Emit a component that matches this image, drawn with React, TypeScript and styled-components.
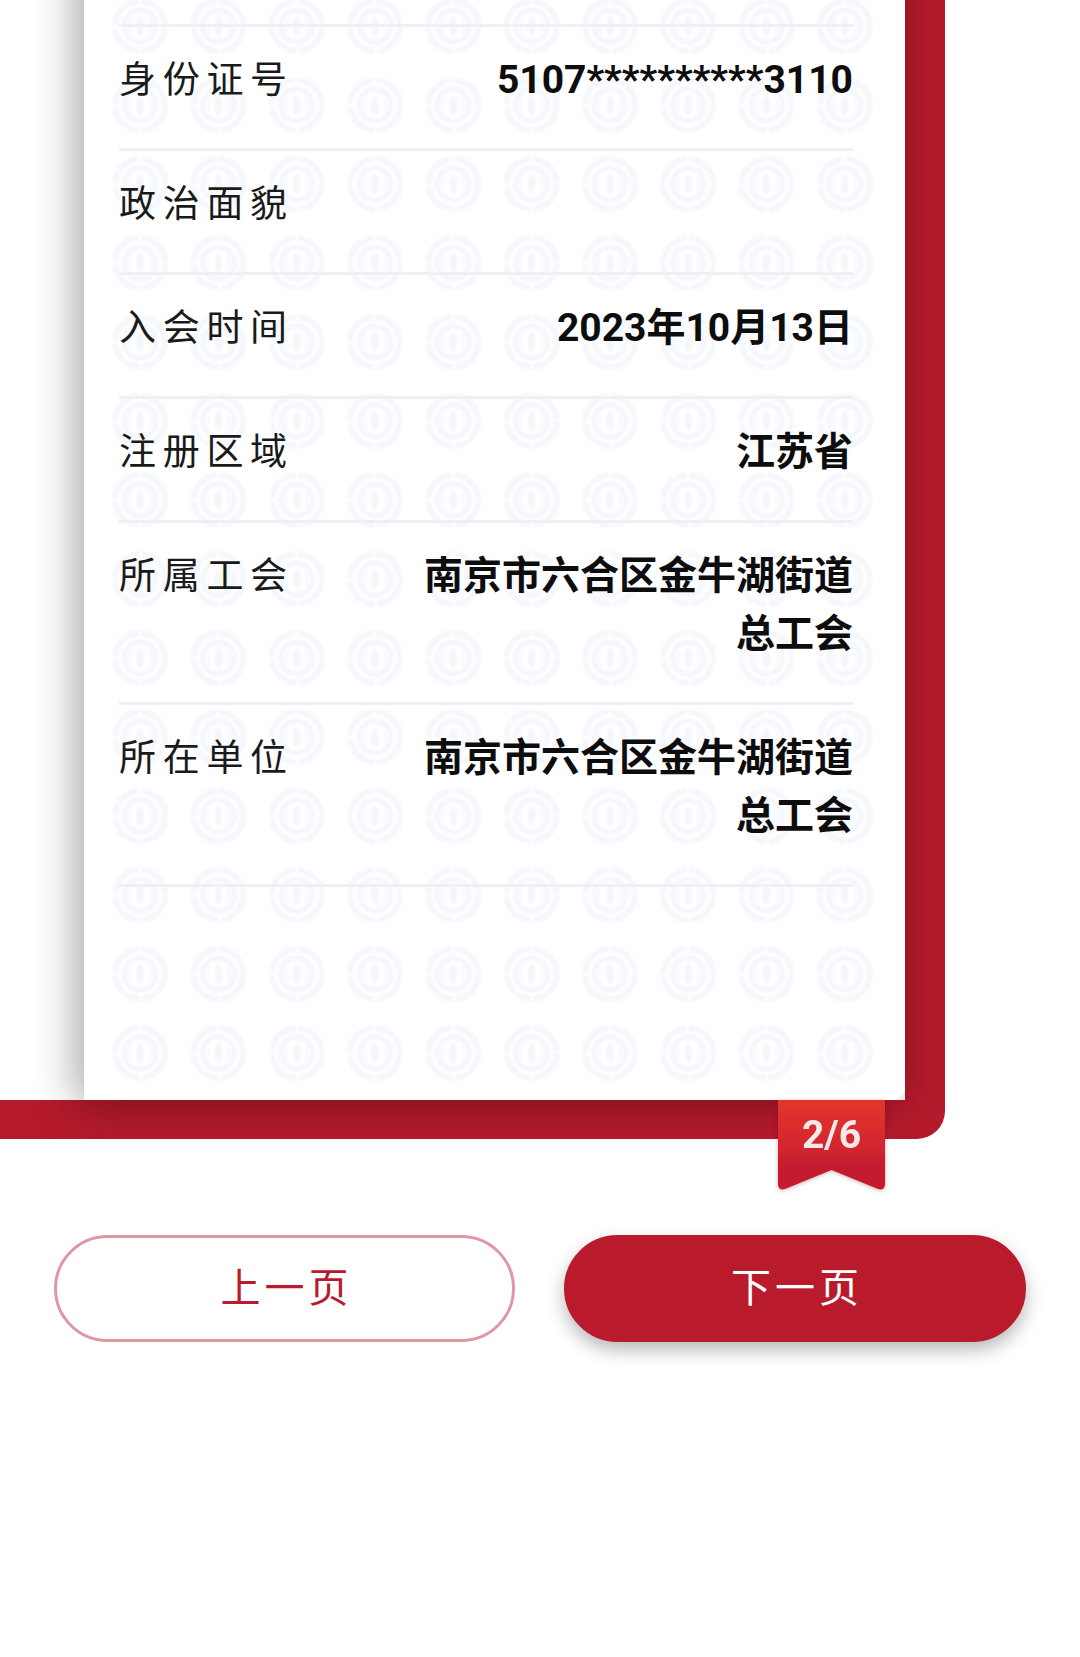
import styled, { createGlobalStyle } from 'styled-components'

const GlobalStyle = createGlobalStyle`
  html, body {
    margin: 0;
    padding: 0;
    background: #fff;
  }
  body {
    font-family: Roboto, "Noto Sans CJK SC", sans-serif;
  }
`

const Page = styled.div`
  width: 1080px;
  height: 1657px;
  overflow: hidden;
  background: #fff;
`

/* the booklet carries on above the fold, so it starts 60px over the top edge */
const Frame = styled.div`
  position: relative;
  width: 945px;
  height: 1199px;
  margin-top: -60px;
  box-sizing: border-box;
  padding: 0 40px 39px 84px;
  border-bottom-right-radius: 28px;
  background:
    linear-gradient(#b41a2c, #b41a2c) 0 100% / 100% 39px no-repeat,
    linear-gradient(#b41a2c, #b41a2c) 100% 0 / 40px 100% no-repeat;
`

const Card = styled.div`
  position: relative;
  height: 100%;
  box-sizing: border-box;
  padding: 84px 52px 0 35px;
  background: #fff;
  border-bottom-right-radius: 12px;
  box-shadow: -7px 3px 44px rgba(0, 0, 0, 0.36);
`

const Watermark = styled.svg`
  position: absolute;
  top: 0;
  left: 17px;
  width: 783px;
  height: 100%;
  filter: blur(1.2px);
`

const InfoList = styled.div`
  position: relative;
  border-top: 3px solid #eef0f3;
`

const InfoRow = styled.div`
  display: flex;
  justify-content: space-between;
  align-items: flex-start;
  gap: 30px;
  padding: 25px 0 38px;
  border-bottom: 3px solid #eef0f3;
`

const Label = styled.div`
  flex: none;
  font-size: 37px;
  line-height: 58px;
  letter-spacing: 6.7px;
  color: #1a1a1a;
`

const Value = styled.div`
  max-width: 430px;
  margin: -1px 0 1px;
  font-size: 39px;
  font-weight: 700;
  line-height: 58px;
  text-align: right;
  color: #0d0d0d;
`

const Ribbon = styled.div`
  position: absolute;
  top: 1160px;
  left: 778px;
  width: 107px;
  height: 90px;
  filter: drop-shadow(0 1px 2px rgba(90, 0, 10, 0.3));

  svg {
    display: block;
    width: 100%;
    height: 100%;
  }
`

const RibbonText = styled.div`
  position: absolute;
  top: 7px;
  left: 0;
  width: 100%;
  font-size: 39px;
  font-weight: 700;
  line-height: 56px;
  text-align: center;
  color: #f6e9e8;
`

const Actions = styled.div`
  display: grid;
  grid-template-columns: 461px 462px;
  gap: 49px;
  padding: 96px 0 0 54px;
`

const PageButton = styled.button<{ $primary?: boolean }>`
  height: 107px;
  box-sizing: border-box;
  padding: 0 0 8px 4px;
  border-radius: 54px;
  border: 3px solid ${p => (p.$primary ? '#b91b2d' : '#dd98a3')};
  background: ${p => (p.$primary ? '#b91b2d' : '#fff')};
  box-shadow: ${p => (p.$primary ? '0 8px 18px rgba(0, 0, 0, 0.28)' : 'none')};
  color: ${p => (p.$primary ? '#fff' : '#b81b2e')};
  font-family: inherit;
  font-size: 40px;
  letter-spacing: 4px;
`

const rows = [
  { label: '身份证号', value: '5107**********3110' },
  { label: '政治面貌', value: '' },
  { label: '入会时间', value: '2023年10月13日' },
  { label: '注册区域', value: '江苏省' },
  { label: '所属工会', value: '南京市六合区金牛湖街道总工会' },
  { label: '所在单位', value: '南京市六合区金牛湖街道总工会' },
]

const Emblem = () => (
  <g fill="none" stroke="#f5f7fc">
    <circle r="25" strokeWidth="6" strokeDasharray="37 2.3" />
    <circle r="16" strokeWidth="5.5" />
    <ellipse rx="4" ry="10" fill="#f4f6fb" stroke="none" />
    <path d="M-9 -7 Q-12 0 -9 7 M9 -7 Q12 0 9 7" strokeWidth="2" />
  </g>
)

export default function App() {
  return (
    <Page>
      <GlobalStyle />
      <Frame>
        <Card>
          <Watermark>
            <defs>
              <pattern id="emblem" x="0" y="46.5" width="78.3" height="79" patternUnits="userSpaceOnUse">
                <g transform="translate(39.15 39.5)">
                  <Emblem />
                </g>
              </pattern>
            </defs>
            <rect width="100%" height="100%" fill="url(#emblem)" />
          </Watermark>
          <InfoList>
            {rows.map(row => (
              <InfoRow key={row.label}>
                <Label>{row.label}</Label>
                <Value>{row.value}</Value>
              </InfoRow>
            ))}
          </InfoList>
        </Card>
        <Ribbon>
          <svg viewBox="0 0 107 90">
            <defs>
              <linearGradient id="ribbon" x1="0" y1="0" x2="0" y2="1">
                <stop offset="0" stopColor="#e3362a" />
                <stop offset="0.55" stopColor="#d22530" />
                <stop offset="0.72" stopColor="#c41c2e" />
                <stop offset="1" stopColor="#c41c2e" />
              </linearGradient>
            </defs>
            <path
              d="M0 0H107V84Q107 91 100 89L53.5 70L7 89Q0 91 0 84Z"
              fill="url(#ribbon)"
            />
          </svg>
          <RibbonText>2/6</RibbonText>
        </Ribbon>
      </Frame>
      <Actions>
        <PageButton>上一页</PageButton>
        <PageButton $primary>下一页</PageButton>
      </Actions>
    </Page>
  )
}
